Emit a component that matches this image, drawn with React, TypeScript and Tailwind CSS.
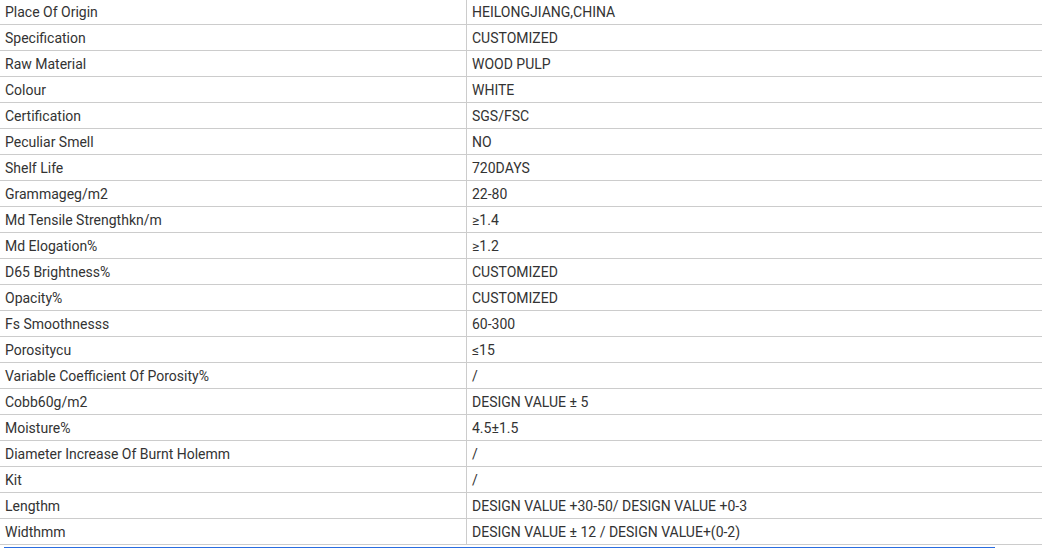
import React from "react";

const rows: [string, string][] = [
  ["Place Of Origin", "HEILONGJIANG,CHINA"],
  ["Specification", "CUSTOMIZED"],
  ["Raw Material", "WOOD PULP"],
  ["Colour", "WHITE"],
  ["Certification", "SGS/FSC"],
  ["Peculiar Smell", "NO"],
  ["Shelf Life", "720DAYS"],
  ["Grammageg/m2", "22-80"],
  ["Md Tensile Strengthkn/m", "≥1.4"],
  ["Md Elogation%", "≥1.2"],
  ["D65 Brightness%", "CUSTOMIZED"],
  ["Opacity%", "CUSTOMIZED"],
  ["Fs Smoothnesss", "60-300"],
  ["Porositycu", "≤15"],
  ["Variable Coefficient Of Porosity%", "/"],
  ["Cobb60g/m2", "DESIGN VALUE ± 5"],
  ["Moisture%", "4.5±1.5"],
  ["Diameter Increase Of Burnt Holemm", "/"],
  ["Kit", "/"],
  ["Lengthm", "DESIGN VALUE +30-50/ DESIGN VALUE +0-3"],
  ["Widthmm", "DESIGN VALUE ± 12 / DESIGN VALUE+(0-2)"],
];

export default function App() {
  return (
    <div
      className="w-[1042px] h-[548px] overflow-hidden bg-white text-[14px] text-[#333]"
      style={{ fontFamily: "Roboto, 'Liberation Sans', sans-serif" }}
    >
      <div className="-mt-px">
        {rows.map(([k, v], i) => (
          <div
            key={i}
            className="grid grid-cols-[467px_1fr] h-[26px] border-b border-[#cccccc]"
          >
            <div className="flex items-center pt-[2px] pl-[5px] border-r border-[#cccccc]">{k}</div>
            <div className="flex items-center pt-[2px] pl-[5px]">{v}</div>
          </div>
        ))}
      </div>
      <div className="mt-[2px] ml-[4px] w-[991px] h-px bg-[#2b6de0]" />
    </div>
  );
}
